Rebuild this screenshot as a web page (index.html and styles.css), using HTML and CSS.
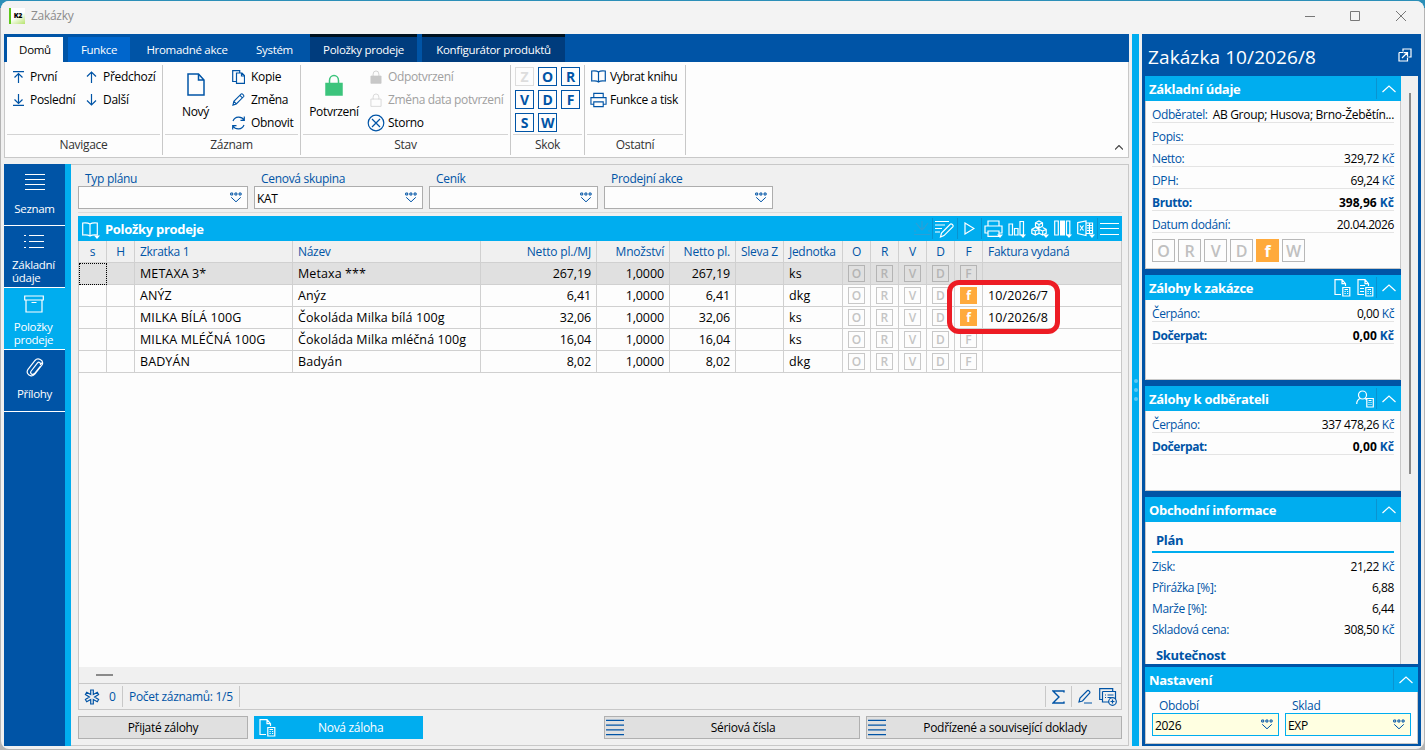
FILE: index.html
```
<!DOCTYPE html>
<html lang="cs">
<head>
    <meta charset="UTF-8">
    <meta name="viewport" content="width=device-width, initial-scale=1.0">
    <title>Zakázky</title>
    <link rel="stylesheet" href="styles.css">
</head>
<body>
    <!-- shared icons -->
    <svg class="defs" width="0" height="0">
        <symbol id="i-drop" viewBox="0 0 12 11"><path d="M.7 1h2v2h-2zM4.9 1h2v2h-2zM9.1 1h2v2h-2zM1.2 5.3L6 9.8l4.8-4.5"/></symbol>
        <symbol id="i-up" viewBox="0 0 14 8"><path d="M.5 7L7 1l6.500 6"/></symbol>
        <symbol id="i-lock" viewBox="0 0 18 22"><path d="M4.500 10V6.500a4.500 5 0 0 1 9 0V10" fill="none"/><path class="lock-body" d="M1 9.500h16V21H1z"/></symbol>
        <symbol id="i-calcdoc" viewBox="0 0 17 18"><path d="M7 15.500H1V.7h7l3.500 4V7M8 .7v4h3.500M8.800 8.500h7v8.500h-7zM10.500 10.500h3.500M10.500 12.500h1.200M13 12.500h1.200M10.500 14.500h1.200M13 14.500h1.200"/></symbol>
        <symbol id="i-lines" viewBox="0 0 20 18"><path d="M0 1.500h20M0 6.500h20M0 11.500h20M0 16.500h20"/></symbol>
        <symbol id="i-book" viewBox="0 0 15 13"><path d="M7.500 2C6 .7 3 .7.700 1v10c2.300-.3 5.300-.3 6.800 1 1.500-1.300 4.500-1.300 6.800-1V1C12 .7 9 .7 7.500 2v10"/></symbol>
        <symbol id="i-print" viewBox="0 0 18 16"><path d="M4 5.500V1h10v4.500M4 12.500H1v-7h16v7h-3M4 10h10v5H4z"/></symbol>
        <symbol id="i-pen" viewBox="0 0 14 14"><path d="M1 13l1-4 8-8c1-.6 3.300 1.500 2.600 2.800l-8 8zM8.500 2.500l3 3M2 9l3 3"/></symbol>
    </svg>

    <div class="window">
        <div class="titlebar">
            <span class="logo">K2</span>
            <span class="title">Zakázky</span>
            <svg class="winbtns" width="104" height="12" viewBox="0 0 104 12"><path d="M0 6.500h10M45.500 1.500h9v9h-9zM91 1l10 10M101 1L91 11"/></svg>
        </div>

        <div class="workspace">
            <div class="main">
                <div class="tabs">
                    <div class="tab active">Domů</div>
                    <div class="tab hot">Funkce</div>
                    <div class="tab t-bulk">Hromadné akce</div>
                    <div class="tab t-sys">Systém</div>
                    <div class="tab dark t-items">Položky prodeje</div>
                    <div class="tab dark t-conf">Konfigurátor produktů</div>
                </div>

                <div class="ribbon">
                    <div class="group g-nav">
                        <div class="group-body">
                            <div class="cmds c-first">
                                <div class="cmd"><svg class="ic" width="11" height="12"><path d="M0 .7h11M5.500 12V3M1.500 6.500l4-4 4 4"/></svg>První</div>
                                <div class="cmd"><svg class="ic" width="11" height="12"><path d="M0 11.300h11M5.500 0v9M1.500 5.500l4 4 4-4"/></svg>Poslední</div>
                            </div>
                            <div class="cmds">
                                <div class="cmd"><svg class="ic" width="11" height="12"><path d="M5.500 12V1M1 5.500L5.500 1 10 5.500"/></svg>Předchozí</div>
                                <div class="cmd"><svg class="ic" width="11" height="12"><path d="M5.500 0v11M1 6.500L5.500 11 10 6.500"/></svg>Další</div>
                            </div>
                        </div>
                        <div class="group-name">Navigace</div>
                    </div>
                    <div class="group g-rec">
                        <div class="group-body">
                            <div class="big b-new">
                                <svg class="ic" width="18" height="23"><path d="M1 1h10.500l5.500 6v15H1zM11.500 1v6H17" stroke-width="1.500"/></svg>
                                <span>Nový</span>
                            </div>
                            <div class="cmds">
                                <div class="cmd"><svg class="ic" width="13" height="14"><path d="M4 11.500H.7V.7h7v2M4.500 3h5.500l2.500 2.500V13.300h-8zM9.500 3v3h3"/></svg>Kopie</div>
                                <div class="cmd"><svg class="ic" width="13" height="13"><use href="#i-pen"/></svg>Změna</div>
                                <div class="cmd"><svg class="ic" width="13" height="14"><path d="M1 5C3 0 9.500 0 12 4M12.300.5V4.300H8.500M12 9c-2 5-8.500 5-11 1M.7 13.500V9.700h3.800"/></svg>Obnovit</div>
                            </div>
                        </div>
                        <div class="group-name">Záznam</div>
                    </div>
                    <div class="group g-state">
                        <div class="group-body">
                            <div class="big b-confirm">
                                <svg class="lock green" width="18" height="22"><use href="#i-lock"/></svg>
                                <span>Potvrzení</span>
                            </div>
                            <div class="cmds">
                                <div class="cmd off"><svg class="lock gray" width="18" height="14"><use href="#i-lock"/></svg>Odpotvrzení</div>
                                <div class="cmd off"><svg class="lock hollow" width="18" height="14"><use href="#i-lock"/></svg>Změna data potvrzení</div>
                                <div class="cmd"><svg class="ic" width="18" height="18"><circle cx="9" cy="9" r="7.800"/><path d="M5 5l8 8M13 5l-8 8"/></svg>Storno</div>
                            </div>
                        </div>
                        <div class="group-name">Stav</div>
                    </div>
                    <div class="group g-jump">
                        <div class="group-body">
                            <div class="jumps">
                                <b class="off">Z</b><b>O</b><b>R</b>
                                <b>V</b><b>D</b><b>F</b>
                                <b>S</b><b>W</b>
                            </div>
                        </div>
                        <div class="group-name">Skok</div>
                    </div>
                    <div class="group g-other">
                        <div class="group-body">
                            <div class="cmds">
                                <div class="cmd"><svg class="ic" width="17" height="13"><use href="#i-book"/></svg>Vybrat knihu</div>
                                <div class="cmd"><svg class="ic" width="17" height="16"><use href="#i-print"/></svg>Funkce a tisk</div>
                            </div>
                        </div>
                        <div class="group-name">Ostatní</div>
                    </div>
                    <svg class="collapse" width="8" height="5"><path d="M0 4.500l4-4 4 4"/></svg>
                </div>

                <div class="content">
                    <div class="nav">
                        <div class="nav-item">
                            <svg width="20" height="18"><use href="#i-lines"/></svg>
                            <span>Seznam</span>
                        </div>
                        <div class="nav-item two">
                            <svg width="20" height="15"><path d="M5 1.500h15M5 7.500h15M5 13.500h15M0 1.500h2M0 7.500h2M0 13.500h2"/></svg>
                            <span>Základní<br>údaje</span>
                        </div>
                        <div class="nav-item two active">
                            <svg width="20" height="18"><path d="M.7 1h18.600v4H.7zM2 5v12h16V5M7.500 7.500h5"/></svg>
                            <span>Položky<br>prodeje</span>
                        </div>
                        <div class="nav-item n-clip">
                            <svg width="18" height="20"><path d="M14.500 8l-6 7.500c-2 2.300-5-.2-3.300-2.500l6.300-8c1.500-1.800 4 .2 2.700 2M14.200 7l2-2.500M5 17.800c-3-.3-5-3.500-3-6.500L9 2.500c2.500-3 9-1 7.300 4L9 16c-1 1.300-2.500 2-4 1.800"/></svg>
                            <span>Přílohy</span>
                        </div>
                    </div>

                    <div class="page">
                        <div class="filters">
                            <div class="field"><label>Typ plánu</label><div class="box"><span></span><svg class="drop" width="12" height="11"><use href="#i-drop"/></svg></div></div>
                            <div class="field"><label>Cenová skupina</label><div class="box"><span>KAT</span><svg class="drop" width="12" height="11"><use href="#i-drop"/></svg></div></div>
                            <div class="field"><label>Ceník</label><div class="box"><span></span><svg class="drop" width="12" height="11"><use href="#i-drop"/></svg></div></div>
                            <div class="field"><label>Prodejní akce</label><div class="box"><span></span><svg class="drop" width="12" height="11"><use href="#i-drop"/></svg></div></div>
                        </div>

                        <div class="grid-head">
                            <svg class="gi" width="18" height="17"><path d="M8 2C6 .7 3 .7.700 1v12c2.300-.3 5.300-.3 7.300 1 2-1.300 5-1.300 7.300-1V1C13 .7 10 .7 8 2v12"/><path class="tri" d="M12 13.500h6L15 17z"/></svg>
                            <h2>Položky prodeje</h2>
                            <div class="tools">
                                <svg class="faded" width="16" height="15"><path d="M0 13.500h16M1 11V9M15 11V9M8 0v9M5.500 6.500L8 9l2.500-2.500M2 2l4 5M14 2l-4 5"/></svg>
                                <i></i>
                                <svg width="20" height="18"><path d="M0 1.500h14M0 5h10M0 8.500h7M0 12h5M5.500 17l1-4 9-9c1-.6 3.300 1.200 2.500 2.600l-9 9z"/></svg>
                                <i></i>
                                <svg class="t-play" width="11" height="13"><path d="M1 1v11l9-5.500z"/></svg>
                                <i></i>
                                <svg width="19" height="18"><path d="M4 6V1h11v5M4 13H1V6h17v7h-3M4 11h11v5.300H4z"/><path class="tri" d="M13 14.500h6l-3 3.500z"/></svg>
                                <svg width="18" height="18"><path d="M1 4h3.500v11H1zM6.500 8.500H10V15H6.500zM12 1.500h3.500V15H12z"/><path class="tri" d="M12 14.500h6l-3 3.500z"/></svg>
                                <svg width="18" height="18"><path d="M8 1l3.500 1.800v3.400L8 8 4.500 6.200V2.800zM4.300 7.500L8 9.300v4L4.300 15 .8 13.300v-4zM11.700 7.500l3.500 1.800v4L11.700 15 8 13.300M4.500 2.800L8 4.600l3.500-1.800M8 4.600V8M.8 9.300l3.500 1.800L8 9.300l3.700 1.800 3.500-1.800M4.300 11v4M11.700 11v4"/><path class="tri" d="M12 14.500h6l-3 3.500z"/></svg>
                                <svg width="18" height="18"><path d="M.7 1h3.600v14H.7zM12.500 1h3.300v14h-3.300z"/><path class="tri" d="M6 .5h5v15H6zM12 14.500h6l-3 3.500z"/></svg>
                                <svg width="18" height="18"><path d="M9 3h6.500v10.500H9M10 5.500h5M10 8h5M10 10.500h5M12.500 3v10M.7 2.700L9 1v14.500L.7 13.500zM3 5.500l3.500 5M6.500 5.500L3 10.500"/><path class="tri" d="M12 14.500h6l-3 3.500z"/></svg>
                                <i></i>
                                <svg class="t-menu" width="19" height="14"><path d="M0 1.500h19M0 6.500h19M0 12.500h19"/></svg>
                            </div>
                        </div>

                        <div class="grid-body">
                            <table class="grid">
                                <colgroup>
                                    <col class="w-flag"><col class="w-flag"><col class="w-short"><col class="w-name"><col class="w-unitprice"><col class="w-qty"><col class="w-net"><col class="w-disc"><col class="w-unit">
                                    <col class="w-flag"><col class="w-flag"><col class="w-flag"><col class="w-flag"><col class="w-flag"><col class="w-inv">
                                </colgroup>
                                <tr>
                                    <th class="c">s</th><th class="c">H</th><th>Zkratka 1</th><th>Název</th><th class="r">Netto pl./MJ</th><th class="r">Množství</th><th class="r">Netto pl.</th><th>Sleva Z</th><th>Jednotka</th>
                                    <th class="c">O</th><th class="c">R</th><th class="c">V</th><th class="c">D</th><th class="c">F</th><th>Faktura vydaná</th>
                                </tr>
                                <tr class="selected">
                                    <td class="cursor"></td><td></td><td>METAXA 3*</td><td>Metaxa ***</td><td class="r">267,19</td><td class="r">1,0000</td><td class="r">267,19</td><td></td><td>ks</td>
                                    <td class="c"><b>O</b></td><td class="c"><b>R</b></td><td class="c"><b>V</b></td><td class="c"><b>D</b></td><td class="c"><b>F</b></td><td></td>
                                </tr>
                                <tr>
                                    <td></td><td></td><td>ANÝZ</td><td>Anýz</td><td class="r">6,41</td><td class="r">1,0000</td><td class="r">6,41</td><td></td><td>dkg</td>
                                    <td class="c"><b>O</b></td><td class="c"><b>R</b></td><td class="c"><b>V</b></td><td class="c"><b>D</b></td><td class="c"><b class="on">f</b></td><td>10/2026/7</td>
                                </tr>
                                <tr>
                                    <td></td><td></td><td>MILKA BÍLÁ 100G</td><td>Čokoláda Milka bílá 100g</td><td class="r">32,06</td><td class="r">1,0000</td><td class="r">32,06</td><td></td><td>ks</td>
                                    <td class="c"><b>O</b></td><td class="c"><b>R</b></td><td class="c"><b>V</b></td><td class="c"><b>D</b></td><td class="c"><b class="on">f</b></td><td>10/2026/8</td>
                                </tr>
                                <tr>
                                    <td></td><td></td><td>MILKA MLÉČNÁ 100G</td><td>Čokoláda Milka mléčná 100g</td><td class="r">16,04</td><td class="r">1,0000</td><td class="r">16,04</td><td></td><td>ks</td>
                                    <td class="c"><b>O</b></td><td class="c"><b>R</b></td><td class="c"><b>V</b></td><td class="c"><b>D</b></td><td class="c"><b>F</b></td><td></td>
                                </tr>
                                <tr>
                                    <td></td><td></td><td>BADYÁN</td><td>Badyán</td><td class="r">8,02</td><td class="r">1,0000</td><td class="r">8,02</td><td></td><td>dkg</td>
                                    <td class="c"><b>O</b></td><td class="c"><b>R</b></td><td class="c"><b>V</b></td><td class="c"><b>D</b></td><td class="c"><b>F</b></td><td></td>
                                </tr>
                            </table>
                            <div class="highlight"></div>
                        </div>
                        <div class="hscroll"><span></span></div>
                        <div class="status">
                            <div class="st-count">
                                <svg class="ic" width="16" height="16" viewBox="0 0 16 16"><path d="M6.700 1h2.600v4.500l4-2.300 1.300 2.300-4 2.500 4 2.500-1.300 2.300-4-2.300V15H6.700v-4.500l-4 2.300-1.300-2.300 4-2.500-4-2.500 1.300-2.300 4 2.300z"/></svg>
                                <span>0</span>
                            </div>
                            <div class="st-total">Počet záznamů: 1/5</div>
                            <div class="st-tools">
                                <svg class="ic" width="13" height="14"><path d="M12 2.500V1H1l6 6-6 6h11v-1.500" stroke-width="1.400"/></svg>
                                <i></i>
                                <svg class="ic" width="15" height="15"><path d="M1 13l1-4 7.500-7.500c1-.6 3 1.300 2.300 2.500L4.500 12zM6 14h8"/></svg>
                                <svg class="ic" width="18" height="18"><path d="M3 11.500H.7V.7h13v3M3.500 3.500h13v8M3.500 3.500v10.500h6.500M6 7h1M8.500 7h6M6 9.500h1M8.500 9.500h4"/><circle cx="13.500" cy="13.500" r="3.800"/><path d="M13.500 11.500v4M11.500 13.500h4"/></svg>
                            </div>
                        </div>

                        <div class="actions">
                            <div class="btn">Přijaté zálohy</div>
                            <div class="btn primary"><svg width="17" height="18"><use href="#i-calcdoc"/></svg>Nová záloha</div>
                            <div class="btn wide"><svg class="ic" width="18" height="17" viewBox="0 0 20 18" preserveAspectRatio="none"><use href="#i-lines"/></svg>Sériová čísla</div>
                            <div class="btn wide"><svg class="ic" width="18" height="17" viewBox="0 0 20 18" preserveAspectRatio="none"><use href="#i-lines"/></svg>Podřízené a související doklady</div>
                        </div>
                    </div>
                </div>
            </div>

            <div class="splitter"><i></i><i></i><i></i></div>

            <div class="side">
                <div class="side-title">
                    <span>Zakázka 10/2026/8</span>
                    <svg width="14" height="14"><path d="M5 3.500V1h8v8h-2.500M1 4.500h4M1 4.500V13h8.500V9.500M4 10l5-5M5.500 4.700h4v4"/></svg>
                </div>
                <div class="side-scroll">
                    <div class="cards">
                        <div class="card k-basic">
                            <div class="card-head"><h3>Základní údaje</h3><span class="up"><svg width="14" height="8"><use href="#i-up"/></svg></span></div>
                            <div class="card-body">
                                <div class="row"><label>Odběratel:</label><span class="cust">AB Group; Husova; Brno-Žebětín...</span></div>
                                <div class="row"><label>Popis:</label></div>
                                <div class="row"><label>Netto:</label><span>329,72 <em>Kč</em></span></div>
                                <div class="row"><label>DPH:</label><span>69,24 <em>Kč</em></span></div>
                                <div class="row strong"><label>Brutto:</label><span>398,96 <em>Kč</em></span></div>
                                <div class="row"><label>Datum dodání:</label><span>20.04.2026</span></div>
                                <div class="flags"><b>O</b><b>R</b><b>V</b><b>D</b><b class="on">f</b><b>W</b></div>
                            </div>
                        </div>
                        <div class="card k-adv">
                            <div class="card-head"><h3>Zálohy k zakázce</h3>
                                <svg width="17" height="18"><use href="#i-calcdoc"/></svg>
                                <svg width="17" height="18"><use href="#i-calcdoc"/><path d="M3 6.500h5M3 9.500h4M3 12.500h4"/></svg>
                                <span class="up"><svg width="14" height="8"><use href="#i-up"/></svg></span></div>
                            <div class="card-body">
                                <div class="row"><label>Čerpáno:</label><span>0,00 <em>Kč</em></span></div>
                                <div class="row strong"><label>Dočerpat:</label><span>0,00 <em>Kč</em></span></div>
                            </div>
                        </div>
                        <div class="card k-adv">
                            <div class="card-head"><h3>Zálohy k odběrateli</h3>
                                <svg width="18" height="18"><circle cx="6.500" cy="5" r="4"/><path d="M.7 14c0-3 1.300-4.500 3.300-5.500M9 8.500l1.500 1M10.800 8.500h6.500v8.500h-6.500zM12.500 10.500h3M12.500 12.500h1M14.500 12.500h1M12.500 14.500h1M14.500 14.500h1"/></svg>
                                <span class="up"><svg width="14" height="8"><use href="#i-up"/></svg></span></div>
                            <div class="card-body">
                                <div class="row"><label>Čerpáno:</label><span>337 478,26 <em>Kč</em></span></div>
                                <div class="row strong"><label>Dočerpat:</label><span>0,00 <em>Kč</em></span></div>
                            </div>
                        </div>
                        <div class="card k-trade">
                            <div class="card-head"><h3>Obchodní informace</h3><span class="up"><svg width="14" height="8"><use href="#i-up"/></svg></span></div>
                            <div class="card-body">
                                <h4>Plán</h4>
                                <div class="row"><label>Zisk:</label><span>21,22 <em>Kč</em></span></div>
                                <div class="row"><label>Přirážka [%]:</label><span>6,88</span></div>
                                <div class="row"><label>Marže [%]:</label><span>6,44</span></div>
                                <div class="row"><label>Skladová cena:</label><span>308,50 <em>Kč</em></span></div>
                                <h4 class="next">Skutečnost</h4>
                            </div>
                        </div>
                    </div>
                    <div class="vscroll"><span></span></div>
                </div>
                <div class="card k-set">
                    <div class="card-head"><h3>Nastavení</h3><span class="up"><svg width="14" height="8"><use href="#i-up"/></svg></span></div>
                    <div class="card-body">
                        <div class="field req"><label>Období</label><div class="box"><span>2026</span><svg class="drop" width="12" height="11"><use href="#i-drop"/></svg></div></div>
                        <div class="field req"><label>Sklad</label><div class="box"><span>EXP</span><svg class="drop" width="12" height="11"><use href="#i-drop"/></svg></div></div>
                    </div>
                </div>
            </div>
        </div>
    </div>
</body>
</html>
```
FILE: styles.css
```
* {
    box-sizing: border-box;
}
body {
    margin: 0;
    height: 750px;
    padding: 1px;
    background: linear-gradient(#2b8fb8 0 8px, #b4b4b4 8px);
    font-family: "Open Sans", "Noto Sans", sans-serif;
    font-size: 12px;
    letter-spacing: -0.3px;
    color: #000;
    overflow: hidden;
}
svg {
    display: block;
    flex: none;
    fill: none;
    stroke: #fff;
    stroke-width: 1.2;
}
.defs {
    position: absolute;
}
.ic, .drop {
    stroke: #0054a6;
}
h2, h3, h4 {
    margin: 0;
    font-size: 13px;
}
.window {
    height: 748px;
    background: #f0f0f0;
    border-radius: 8px;
    overflow: hidden;
}
.titlebar {
    height: 33px;
    background: #f3f3f3;
    display: flex;
    align-items: center;
    padding: 0 15px 4px 8px;
}
.logo {
    width: 16px;
    height: 16px;
    border-left: 2px solid #5fc71c;
    background: linear-gradient(150deg, #fff 50%, #b5e36b);
    font-size: 7px;
    font-weight: 800;
    line-height: 15px;
    text-align: center;
}
.title {
    flex: 1;
    margin-left: 6px;
    color: #8c8c8c;
}
.winbtns {
    stroke: #777;
    stroke-width: 1;
}
.workspace {
    display: flex;
    height: 712px;
    padding-left: 3px;
}
.main {
    width: 1125px;
    display: flex;
    flex-direction: column;
}

/* ribbon */
.tabs {
    height: 28px;
    background: #0054a6;
    display: flex;
    padding-left: 3px;
}
.tab {
    margin-top: 3px;
    height: 25px;
    line-height: 26px;
    text-align: center;
    color: #fff;
    font-size: 11.5px;
}
.tab.active {
    width: 56px;
    background: #fdfdfd;
    color: #000;
}
.tab.hot {
    width: 62px;
    margin-left: 5px;
    background: #0066cc;
}
.t-bulk {
    width: 114px;
}
.t-sys {
    width: 61px;
}
.tab.dark {
    margin-top: 0;
    height: 28px;
    border-top: 3px solid #00121f;
    background: #003c7d;
}
.t-items {
    width: 107px;
    margin-left: 5px;
}
.t-conf {
    width: 143px;
    margin-left: 5px;
}
.ribbon {
    height: 96px;
    background: #fdfdfd;
    border: 1px solid #c8c8c8;
    border-top: 0;
    display: flex;
    padding-left: 2px;
}
.group {
    height: 90px;
    margin-top: 3px;
    margin-right: 2px;
    padding-right: 2px;
    border-right: 1px solid #c8c8c8;
}
.g-nav { width: 156px; }
.g-rec { width: 136px; }
.g-state { width: 208px; }
.g-jump { width: 72px; }
.g-other { width: 99px; }
.group-body {
    height: 70px;
    display: flex;
    border-bottom: 1px solid #d4d4d4;
}
.group-name {
    line-height: 20px;
    text-align: center;
    color: #333;
}
.cmd {
    height: 23px;
    display: flex;
    align-items: center;
    gap: 6px;
    white-space: nowrap;
}
.cmd.off {
    color: #a0a0a0;
}
.g-nav .cmds {
    padding-left: 6px;
}
.c-first {
    width: 73px;
}
.big {
    display: flex;
    flex-direction: column;
    align-items: center;
    gap: 7px;
    padding-top: 8px;
}
.b-new {
    width: 67px;
    padding-right: 6px;
}
.b-confirm {
    width: 62px;
    padding-top: 9px;
}
.g-state .cmds {
    padding-left: 2px;
}
.g-state .cmd {
    gap: 3px;
}
.g-state .off {
    letter-spacing: -0.35px;
}
.lock {
    stroke: #3cc47c;
}
.lock.green {
    fill: #3cc47c;
    stroke-width: 1.5;
}
.lock.gray {
    fill: #c8c8c8;
    stroke: #c8c8c8;
}
.lock.hollow {
    stroke: #d0d0d0;
}
.jumps {
    display: grid;
    grid-template-columns: repeat(3, 19px);
    grid-auto-rows: 19px;
    gap: 4px;
    padding: 2px 0 0 2px;
}
.jumps b {
    border: 1px solid #0054a6;
    color: #0054a6;
    line-height: 18px;
    text-align: center;
    font-size: 14px;
}
.jumps .off {
    border-color: #ddd;
    color: #ddd;
}
.g-other .cmd {
    gap: 3px;
    padding-left: 3px;
}
.collapse {
    margin: 83px 5px 0 auto;
    stroke: #444;
}

/* left navigation */
.content {
    flex: 1;
    display: flex;
    margin-top: 6px;
}
.nav {
    flex: none;
    width: 67px;
    background: #0054a6;
    border-right: 6px solid #00adef;
}
.nav-item {
    height: 62px;
    border-bottom: 1px solid #fff;
    display: flex;
    flex-direction: column;
    align-items: center;
    gap: 11px;
    padding-top: 9px;
    color: #fff;
    font-size: 11.5px;
    line-height: 13px;
}
.nav-item.two {
    gap: 9px;
    padding: 8px 2px 0 0;
}
.nav-item.active {
    background: #00adef;
    gap: 7px;
    padding-top: 7px;
}
.nav-item.n-clip {
    gap: 9px;
    padding-top: 8px;
}

/* filters */
.page {
    flex: 1;
    border: 1px solid #c8c8c8;
    border-left: 0;
    padding: 7px 6px 0 7px;
}
.filters {
    display: grid;
    grid-template-columns: 170px 169px 169px 169px;
    gap: 6px;
    height: 41px;
    border-bottom: 1px solid #dcdcdc;
}
.field label {
    display: block;
    height: 14px;
    line-height: 14px;
    padding-left: 7px;
    color: #0054a6;
}
.box {
    height: 23px;
    border: 1px solid #adadad;
    background: #fdfdfd;
    display: flex;
    align-items: center;
    justify-content: space-between;
    padding: 1px 5px 0 2px;
}
.drop {
    stroke-width: 1;
    margin-top: -1px;
}

/* grid */
.grid-head {
    margin-top: 3px;
    height: 25px;
    background: #00adef;
    display: flex;
    align-items: center;
    padding: 0 3px 0 4px;
    color: #fff;
}
.grid-head h2 {
    flex: 1;
    margin-left: 5px;
}
.gi {
    margin-top: 4px;
}
.tri {
    fill: #fff;
    stroke: none;
}
.tools {
    display: flex;
    align-items: center;
    gap: 5px;
}
.tools i {
    width: 1px;
    height: 21px;
    margin: 0 -3px;
    background: #0a93d0;
}
.tools .t-play {
    margin: 0 4px;
}
.tools .faded {
    stroke: #2b9fd6;
}
.grid-body {
    position: relative;
    height: 426px;
    background: #fdfdfd;
    border: 1px solid #c8c8c8;
    border-width: 0 1px;
}
.grid {
    table-layout: fixed;
    width: 1042px;
    border-collapse: separate;
    border-spacing: 0;
    font-size: 12.5px;
    letter-spacing: 0.1px;
}
.w-flag { width: 28px; }
.w-short { width: 158px; }
.w-name { width: 188px; }
.w-unitprice { width: 116px; }
.w-qty { width: 73px; }
.w-net { width: 66px; }
.w-disc { width: 48px; }
.w-unit { width: 59px; }
.w-inv { width: 138px; }
.grid th, .grid td {
    height: 22px;
    line-height: 21px;
    padding: 0 5px;
    border-right: 1px solid #d0d0d0;
    border-bottom: 1px solid #d0d0d0;
    text-align: left;
    white-space: nowrap;
}
.grid td {
    padding-top: 1px;
    line-height: 20px;
}
.grid th {
    background: #f0f0f0;
    color: #0054a6;
    font-weight: normal;
    font-size: 12px;
    letter-spacing: -0.3px;
}
.grid .r {
    text-align: right;
    letter-spacing: -0.1px;
}
.grid th.r {
    letter-spacing: -0.2px;
}
.grid .c {
    text-align: center;
    padding: 0;
}
.grid tr > :last-child {
    border-right: 0;
}
.selected td {
    background: #e0e0e0;
}
.grid .cursor {
    outline: 1px dotted #000;
    outline-offset: -1px;
}
.grid b {
    display: block;
    width: 17px;
    height: 17px;
    margin: 0 auto;
    border: 1px solid #c8c8c8;
    color: #c4c4c4;
    font-size: 12px;
    line-height: 15px;
    font-weight: 600;
}
.selected b {
    border-color: #b4b4b4;
    color: #b4b4b4;
}
.grid .on, .flags .on {
    background: #ffaa3c;
    border-color: #ffaa3c;
    color: #fff;
    font-weight: bold;
}
.highlight {
    position: absolute;
    left: 868px;
    top: 39px;
    width: 113px;
    height: 54px;
    border: 5px solid #ed1c24;
    border-radius: 12px;
}
.hscroll {
    height: 17px;
    border: 1px solid #c8c8c8;
    border-top: 0;
    padding: 7px 0 0 17px;
}
.hscroll span {
    display: block;
    width: 17px;
    height: 2px;
    background: #8a8a8a;
}
.status {
    height: 26px;
    border: 1px solid #c8c8c8;
    border-top: 0;
    display: flex;
    align-items: center;
    color: #0054a6;
}
.st-count, .st-total {
    height: 21px;
    display: flex;
    align-items: center;
    border-right: 1px solid #c8c8c8;
}
.st-count {
    width: 44px;
    gap: 9px;
    padding-left: 5px;
}
.st-total {
    width: 117px;
    padding-left: 6px;
}
.st-tools {
    height: 21px;
    margin-left: auto;
    display: flex;
    align-items: center;
    gap: 6px;
    padding: 0 4px 0 6px;
    border-left: 1px solid #c8c8c8;
}
.st-tools i {
    width: 1px;
    height: 21px;
    background: #c8c8c8;
}
.actions {
    display: grid;
    grid-template-columns: 170px 169px 169px 256px 256px;
    gap: 6px;
    margin-top: 6px;
}
.btn {
    height: 23px;
    border: 1px solid #b0b0b0;
    background: #e0e0e0;
    display: flex;
    align-items: center;
    justify-content: center;
}
.btn svg {
    margin-left: 4px;
}
.btn.primary {
    background: #00adef;
    border-color: #00adef;
    color: #fff;
    justify-content: flex-start;
    gap: 42px;
}
.btn.wide {
    position: relative;
    padding-left: 22px;
}
.btn.wide svg {
    position: absolute;
    left: -3px;
}
.btn.wide:nth-child(3) {
    grid-column: 4;
}

/* splitter */
.splitter {
    width: 7px;
    margin: 0 3px;
    background: #00adef;
    display: flex;
    flex-direction: column;
    align-items: center;
    justify-content: center;
    gap: 5px;
}
.splitter i {
    width: 4px;
    height: 4px;
    border-radius: 2px;
    background: #5cc8f5;
}

/* side panel */
.side {
    width: 279px;
    background: #0054a6;
    padding: 0 3px;
}
.side-title {
    height: 42px;
    display: flex;
    justify-content: space-between;
    padding: 8px 6px 0 3px;
    color: #fff;
    font-size: 19px;
    line-height: 30px;
    letter-spacing: 0.1px;
}
.side-title svg {
    margin-top: 6px;
}
.side-scroll {
    display: flex;
    height: 588px;
    overflow: hidden;
}
.cards {
    width: 256px;
}
.vscroll {
    width: 17px;
    background: #f0f0f0;
    padding: 17px 0 0 8px;
}
.vscroll span {
    display: block;
    width: 2px;
    height: 381px;
    background: #8a8a8a;
}
.card-head {
    height: 25px;
    background: #00adef;
    color: #fff;
    display: flex;
    align-items: center;
    gap: 6px;
    padding-left: 4px;
}
.card-head h3 {
    flex: 1;
}
.up {
    height: 21px;
    margin-left: -4px;
    padding: 7px 5px 0;
    border-left: 1px solid #0a93d0;
}
.card-body {
    background: #fdfdfd;
    border: 1px solid #c8c8c8;
    border-top: 0;
    padding: 0 6px;
}
.k-basic .card-body {
    height: 168px;
}
.k-basic, .k-adv {
    margin-bottom: 6px;
}
.k-adv .card-body {
    height: 80px;
}
.k-trade .card-body {
    height: 144px;
    padding-top: 9px;
    overflow: hidden;
}
.row {
    height: 22px;
    display: flex;
    justify-content: space-between;
    line-height: 28px;
    border-bottom: 1px solid #e4e4e4;
    white-space: nowrap;
    letter-spacing: -0.4px;
}
.row label, .row em {
    color: #0054a6;
    font-style: normal;
}
.row .cust {
    letter-spacing: -0.3px;
}
.strong {
    font-weight: bold;
}
.strong span {
    letter-spacing: 0;
}
.flags {
    display: flex;
    gap: 3px;
    margin-top: 6px;
}
.flags b {
    width: 23px;
    height: 23px;
    border: 1px solid #b8b8b8;
    color: #c0c0c0;
    font-size: 16px;
    font-weight: 600;
    line-height: 22px;
    text-align: center;
}
.k-trade h4 {
    height: 22px;
    padding-left: 4px;
    color: #0054a6;
    border-bottom: 2px solid #00adef;
    margin-bottom: 3px;
    line-height: 18px;
}
.k-trade .next {
    border: 0;
    margin-top: 6px;
}
.k-trade .row {
    height: 21px;
    line-height: 22px;
    border: 0;
}
.k-set {
    margin-top: 3px;
}
.k-set .card-body {
    height: 52px;
    padding-top: 7px;
    display: grid;
    grid-template-columns: 127px 126px;
    gap: 6px;
}
.req .box {
    border-color: #00adef;
    background: #ffffe1;
}
```
